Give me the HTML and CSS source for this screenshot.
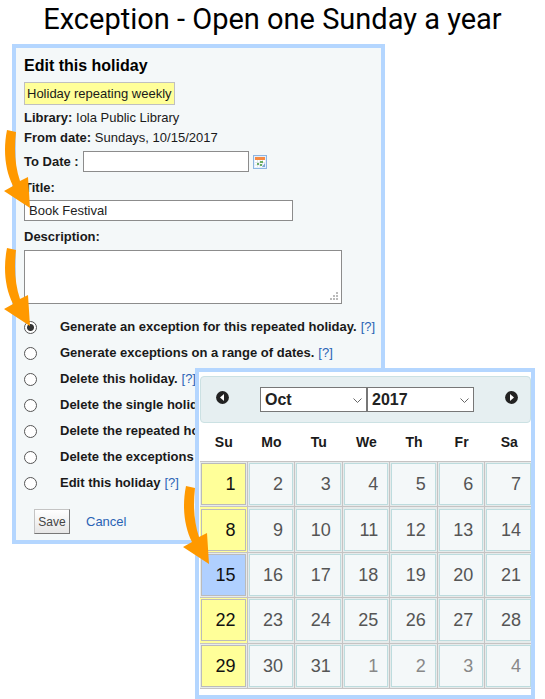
FILE: index.html
```html
<!DOCTYPE html>
<html lang="en">
<head>
<meta charset="utf-8">
<meta name="viewport" content="width=device-width, initial-scale=1">
<title>Exception - Open one Sunday a year</title>
<link rel="stylesheet" href="styles.css">
</head>
<body>
<svg class="defs" width="0" height="0" aria-hidden="true">
  <symbol id="arrow" viewBox="0 0 27 79">
    <path fill="#ff9900" d="M3 0L12 2C10 20 11 36 16 51L24 47L26 78L0 61L9 56C1 40-1 20 3 0Z"/>
  </symbol>
</svg>
<h1 class="slide-title">Exception - Open one Sunday a year</h1>
<main class="stage">
  <form class="panel holiday">
    <h2>Edit this holiday</h2>
    <p class="badge">Holiday repeating weekly</p>
    <p class="line"><b>Library:</b> Iola Public Library</p>
    <p class="line pointed"><b>From date:</b> Sundays, 10/15/2017
      <svg class="arrow" aria-hidden="true"><use href="#arrow"/></svg></p>
    <div class="to-date">
      <label for="to">To Date :</label>
      <input id="to" class="box" type="text">
      <button type="button" class="picker" aria-label="Choose date">
        <svg width="14" height="14" viewBox="0 0 14 14" aria-hidden="true">
          <rect x=".5" y=".5" width="13" height="13" fill="#e4f0fc" stroke="#8db5e2"/>
          <rect x="2" y="2" width="10" height="10" fill="#fff"/>
          <rect x="2" y="2" width="10" height="3" fill="#f68b45"/>
          <path d="M2 7.500h10M2 10h7M4.500 5v7M7 5v7M9.500 5v7" stroke="#d3dbe3" stroke-width=".7"/>
          <path d="M7 6h3v2H7zM4 8h2v2H4zM7 9h2v2H7z" fill="#68ad63"/>
          <path d="M12 8v4H9z" fill="#7aa4d5"/>
        </svg>
      </button>
    </div>
    <label class="caption" for="title">Title:</label>
    <input id="title" class="box title-box" type="text" value="Book Festival">
    <label class="caption" for="desc">Description:</label>
    <div class="area pointed">
      <textarea id="desc" class="box"></textarea>
      <svg class="grip" width="8" height="8" viewBox="0 0 8 8" aria-hidden="true"><path fill="#bbb" d="M6 0h2v2H6zM3 3h2v2H3zM6 3h2v2H6zM0 6h2v2H0zM3 6h2v2H3zM6 6h2v2H6z"/></svg>
      <svg class="arrow" aria-hidden="true"><use href="#arrow"/></svg>
    </div>
    <ul class="choices">
      <li><input type="radio" name="op" id="o1" checked><label for="o1">Generate an exception for this repeated holiday.</label><a href="#">[?]</a></li>
      <li><input type="radio" name="op" id="o2"><label for="o2">Generate exceptions on a range of dates.</label><a href="#">[?]</a></li>
      <li><input type="radio" name="op" id="o3"><label for="o3">Delete this holiday.</label><a href="#">[?]</a></li>
      <li><input type="radio" name="op" id="o4"><label class="cut" for="o4">Delete the single holid</label></li>
      <li><input type="radio" name="op" id="o5"><label class="cut" for="o5">Delete the repeated ho</label></li>
      <li><input type="radio" name="op" id="o6"><label class="cut" for="o6">Delete the exceptions</label></li>
      <li><input type="radio" name="op" id="o7"><label for="o7">Edit this holiday</label><a href="#">[?]</a></li>
    </ul>
    <div class="actions"><button type="submit" class="save">Save</button><a href="#">Cancel</a></div>
  </form>

  <section class="panel calendar" aria-label="Calendar">
    <svg class="arrow" aria-hidden="true"><use href="#arrow"/></svg>
    <div class="clip">
      <div class="cal-head">
        <button type="button" class="nav" aria-label="Previous month"><svg width="13" height="13" viewBox="0 0 13 13"><circle cx="6.500" cy="6.500" r="6.400" fill="#222"/><path d="M8 3v7L4 6.500z" fill="#fff"/></svg></button>
        <div class="selects">
          <span class="pick"><select aria-label="Month"><option>Oct</option></select><svg width="9" height="5" viewBox="0 0 9 5"><path d="M.5.500l4 4 4-4" fill="none" stroke="#666"/></svg></span>
          <span class="pick"><select aria-label="Year"><option>2017</option></select><svg width="9" height="5" viewBox="0 0 9 5"><path d="M.5.500l4 4 4-4" fill="none" stroke="#666"/></svg></span>
        </div>
        <button type="button" class="nav" aria-label="Next month"><svg width="13" height="13" viewBox="0 0 13 13"><circle cx="6.500" cy="6.500" r="6.400" fill="#222"/><path d="M5 3v7l4-3.500z" fill="#fff"/></svg></button>
      </div>
      <table>
        <thead><tr><th>Su</th><th>Mo</th><th>Tu</th><th>We</th><th>Th</th><th>Fr</th><th>Sa</th></tr></thead>
        <tbody>
          <tr><td class="weekly"><a href="#">1</a></td><td><a href="#">2</a></td><td><a href="#">3</a></td><td><a href="#">4</a></td><td><a href="#">5</a></td><td><a href="#">6</a></td><td><a href="#">7</a></td></tr>
          <tr><td class="weekly glow"><a href="#">8</a></td><td><a href="#">9</a></td><td><a href="#">10</a></td><td><a href="#">11</a></td><td><a href="#">12</a></td><td><a href="#">13</a></td><td><a href="#">14</a></td></tr>
          <tr><td class="chosen"><a href="#">15</a></td><td><a href="#">16</a></td><td><a href="#">17</a></td><td><a href="#">18</a></td><td><a href="#">19</a></td><td><a href="#">20</a></td><td><a href="#">21</a></td></tr>
          <tr><td class="weekly glow"><a href="#">22</a></td><td><a href="#">23</a></td><td><a href="#">24</a></td><td><a href="#">25</a></td><td><a href="#">26</a></td><td><a href="#">27</a></td><td><a href="#">28</a></td></tr>
          <tr><td class="weekly"><a href="#">29</a></td><td><a href="#">30</a></td><td><a href="#">31</a></td><td class="next"><a href="#">1</a></td><td class="next"><a href="#">2</a></td><td class="next"><a href="#">3</a></td><td class="next"><a href="#">4</a></td></tr>
        </tbody>
      </table>
    </div>
  </section>
</main>
</body>
</html>
```
FILE: styles.css
```css
* { box-sizing: border-box; }
body { margin: 0; background: #fff; color: #1a1a1a; font: 13px/20px "Liberation Sans", Arial, sans-serif; }
h2, p, ul { margin: 0; padding: 0; }
a { color: #2a63b5; text-decoration: none; }
button { font: inherit; cursor: pointer; }
.defs { position: absolute; }

.slide-title { margin: 0; height: 44px; text-align: center; color: #000; font: 400 29px/38px Roboto, sans-serif; }
.stage { position: relative; max-width: 545px; padding: 0 160px 155px 12px; }
.panel { border: 4px solid #b4d6ff; }

.arrow { position: absolute; width: 27px; height: 79px; pointer-events: none; }
.pointed { position: relative; }

.holiday { padding: 8px 8px 6px; background: #f4f8f9; }
.holiday h2 { color: #000; font-size: 16px; line-height: 20px; margin-bottom: 6px; }
.badge { width: max-content; height: 23px; padding: 0 2px; margin-bottom: 3px; border: 1px solid #c0c0c0; background: #ffff99; line-height: 21px; }
.line .arrow { left: -20px; top: 2px; }
.to-date { display: flex; align-items: center; gap: 4px; margin-top: 3px; font-weight: bold; }
.box { display: block; height: 21px; border: 1px solid #8c8c8c; border-radius: 0; background: #fff; color: #222; padding: 0 4px; font: 13px/18px "Liberation Sans", Arial, sans-serif; }
.to-date .box { width: 166px; }
.picker { display: flex; padding: 0; border: 0; background: none; }
.caption { display: block; font-weight: bold; margin-top: 6px; }
.title-box { width: 77%; margin-top: 2px; }
.area { margin-top: 3px; }
.area .box { width: 91%; height: 54px; resize: none; }
.area .arrow { left: -20px; top: -2px; }
.grip { position: absolute; left: calc(91% - 12px); bottom: 4px; }

.choices { list-style: none; margin-top: 10px; }
.choices li { display: flex; align-items: center; height: 26px; white-space: nowrap; }
.choices label { font-weight: bold; margin: 0 4px 0 23px; }
.choices .cut { width: 135px; overflow: hidden; }
.choices input { appearance: none; flex-shrink: 0; width: 13px; height: 13px; margin: 0; border: 1px solid #555; border-radius: 50%; background: #fff; }
.choices input:checked { background: radial-gradient(circle, #333 0 3px, #fff 4px); }
.actions { display: flex; align-items: center; gap: 16px; padding: 13px 0 0 10px; }
.save { width: 36px; height: 25px; padding: 0; border: 1px solid #c4c4c4; border-right-color: #777; border-bottom-color: #777; background: linear-gradient(#fff, #e6e6e6); color: #444; font-size: 12px; }

.calendar { position: absolute; left: 195px; right: 10px; top: 324px; background: #fff; }
.calendar > .arrow { left: -16px; top: 114px; z-index: 1; }
.clip { overflow: hidden; padding: 4px 0 6px 1px; }
.cal-head { display: flex; align-items: center; justify-content: space-between; height: 47px; padding: 0 12px 0 15px; border: 1px solid #cbe1e3; border-radius: 4px; background: #e6eff1; }
.nav { display: flex; padding: 0; border: 0; background: none; margin-bottom: 4px; }
.selects { display: flex; }
.pick { position: relative; width: 107px; }
.pick select { display: block; appearance: none; width: 100%; height: 25px; padding: 0 4px; border: 1px solid #777; border-radius: 0; background: #fff; color: #222; font: bold 16px/22px "Liberation Sans", Arial, sans-serif; }
.pick svg { position: absolute; right: 5px; top: 11px; }

.calendar table { width: calc(100% + 2px); height: 266px; table-layout: fixed; border-collapse: separate; border-spacing: 0; }
.calendar th { height: 38px; padding: 0; font-size: 14px; }
.calendar td { padding: 1px; border: 1px solid #c6c3c3; border-width: 1px 1px 0 0; background: #e6ebeb; }
.calendar tr:last-child td { border-bottom-width: 1px; }
.calendar td a { display: flex; align-items: center; justify-content: flex-end; height: 42px; padding-right: 9px; border: 1px solid #bddcde; background: #f4f8f9; color: #555; font-size: 18px; }
.calendar td.weekly a { background: #ffff99; border-color: #bbb; color: #111; }
.calendar td.glow { background: #ffff99; }
.calendar td.chosen a { background: #b0d0ff; border-color: #bbb; color: #111; }
.calendar td.next a { color: #888; }
```
